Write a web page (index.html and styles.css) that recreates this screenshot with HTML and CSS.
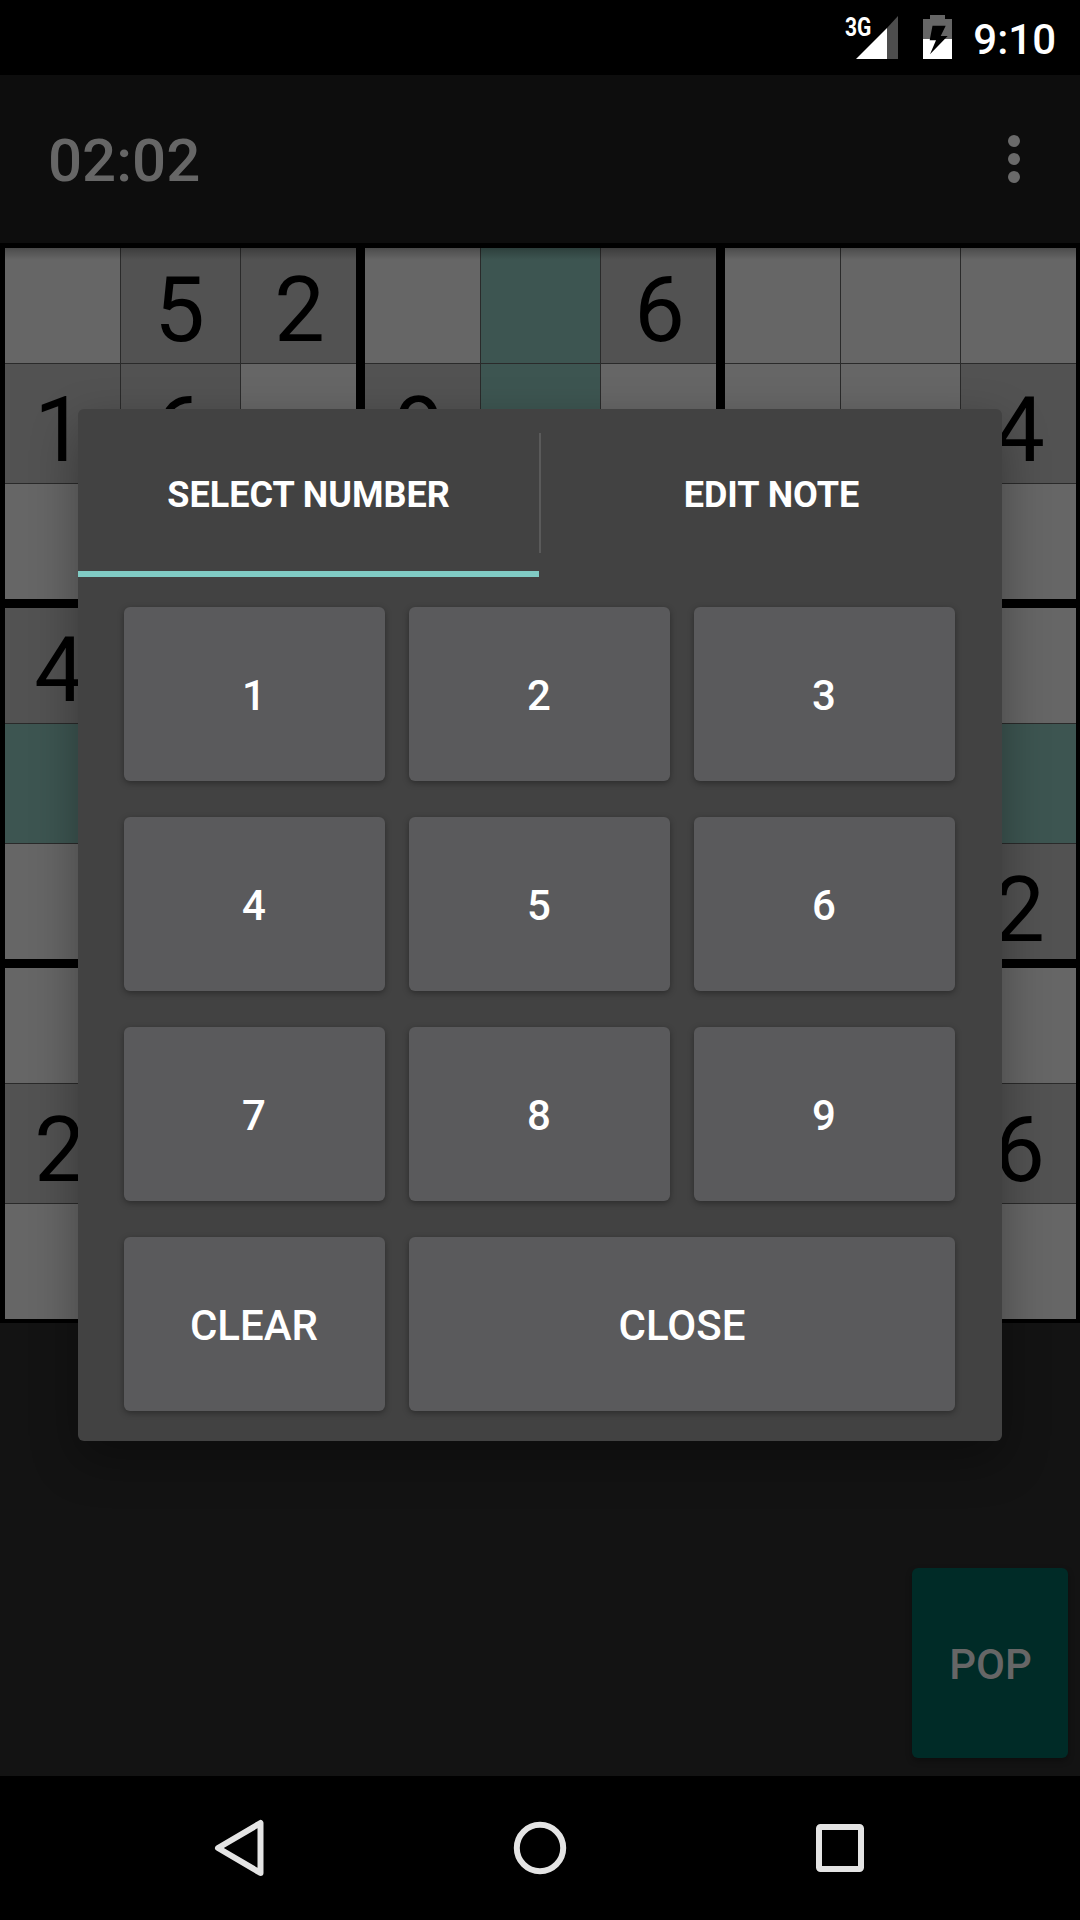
FILE: index.html
```html
<!DOCTYPE html>
<html lang="en">
<head>
<meta charset="utf-8">
<title>Sudoku</title>
<link rel="stylesheet" href="styles.css">
</head>
<body>
<div class="screen">
  <header class="status">
    <svg class="status-icons" width="110" height="75" viewBox="0 0 110 75">
      <path fill="#4d4d4d" d="M45 28 56 16V59H45z"/>
      <path fill="#fff" d="M14 59 45 28V59z"/>
      <path fill="#666" d="M88 15h15v4h7v20H81V19h7z"/>
      <path fill="#fff" d="M81 39h29v20H81z"/>
      <path fill="#000" d="M90.500 25.700H103.700L98.700 36H105.700L88 54.300 94 40.300H87.700z"/>
    </svg>
    <span class="network">3G</span>
    <span class="clock">9:10</span>
  </header>
  <div class="appbar">
    <span class="timer">02:02</span>
    <svg width="12" height="48" viewBox="0 0 12 48" fill="#6a6a6a"><circle cx="6" cy="6" r="6"/><circle cx="6" cy="24" r="6"/><circle cx="6" cy="42" r="6"/></svg>
  </div>
  <main class="board">
    <div class="block"><i></i><i class="given">5</i><i class="given">2</i><i class="given">1</i><i class="given">6</i><i></i><i></i><i></i><i></i></div>
    <div class="block"><i></i><i class="hl"></i><i class="given">6</i><i class="given">9</i><i class="hl"></i><i></i><i></i><i class="hl"></i><i></i></div>
    <div class="block"><i></i><i></i><i></i><i></i><i></i><i class="given">4</i><i></i><i></i><i></i></div>
    <div class="block"><i class="given">4</i><i></i><i></i><i class="hl"></i><i class="hl"></i><i class="hl"></i><i></i><i></i><i></i></div>
    <div class="block"><i></i><i class="hl"></i><i></i><i class="hl"></i><i class="hl"></i><i class="hl"></i><i></i><i class="hl"></i><i></i></div>
    <div class="block"><i></i><i></i><i></i><i class="hl"></i><i class="hl"></i><i class="hl"></i><i></i><i></i><i class="given">2</i></div>
    <div class="block"><i></i><i></i><i></i><i class="given">2</i><i></i><i></i><i></i><i></i><i></i></div>
    <div class="block"><i></i><i class="hl"></i><i></i><i></i><i class="hl"></i><i></i><i></i><i class="hl"></i><i></i></div>
    <div class="block"><i></i><i></i><i></i><i></i><i></i><i class="given">6</i><i></i><i></i><i></i></div>
  </main>
  <div class="actions"><button class="pop">POP</button></div>
  <nav class="navbar">
    <svg width="62" height="62" viewBox="0 0 62 62"><path d="M51.500 6V56L9 31z"/></svg>
    <svg width="62" height="62" viewBox="0 0 62 62"><circle cx="31" cy="31" r="23.200"/></svg>
    <svg width="62" height="62" viewBox="0 0 62 62"><rect x="10" y="10" width="42" height="42" rx="1.500"/></svg>
  </nav>
  <section class="dialog">
    <div class="tabs">
      <div class="tab active">SELECT NUMBER</div>
      <div class="divider"></div>
      <div class="tab">EDIT NOTE</div>
    </div>
    <div class="keys">
      <button>1</button><button>2</button><button>3</button>
      <button>4</button><button>5</button><button>6</button>
      <button>7</button><button>8</button><button>9</button>
      <button>CLEAR</button><button class="wide">CLOSE</button>
    </div>
  </section>
</div>
</body>
</html>
```
FILE: styles.css
```css
* { box-sizing: border-box; }
body { margin: 0; background: #000; font-family: Roboto, sans-serif; }
button { border: 0; padding: 0; margin: 0; font: 500 42px/50px Roboto, sans-serif; border-radius: 6px; }
svg { display: block; }
.screen {
  position: relative; width: 1080px; height: 1920px; overflow: hidden;
  display: flex; flex-direction: column; background: #131313;
}
.status {
  position: relative; height: 75px; background: #000; color: #fff;
  display: flex; justify-content: flex-end; align-items: center; padding-right: 24px;
}
.status-icons { margin-right: 21px; }
/* network label sits over the signal triangle's corner */
.network {
  position: absolute; left: 845px; top: 13px;
  font-weight: 700; font-size: 25px; line-height: 30px;
  transform: scaleX(.84); transform-origin: left;
}
.clock { font-weight: 500; font-size: 42px; line-height: 50px; padding-top: 5px; }
.appbar {
  height: 168px; background: #0d0d0d; color: #666;
  display: flex; align-items: center; justify-content: space-between; padding: 0 60px 0 48px;
}
.timer { font-weight: 500; font-size: 60px; line-height: 70px; padding-top: 4px; }
.board {
  position: relative; height: 1080px; background: #000; padding: 5px 4px 4px 5px;
  display: grid; grid-template-columns: repeat(3, 351px); grid-template-rows: repeat(3, 351px); gap: 9px;
}
.board::before {
  content: ""; position: absolute; left: 0; right: 0; top: 0; height: 17px;
  background: linear-gradient(rgba(0,0,0,.45), rgba(0,0,0,.2) 45%, rgba(0,0,0,0));
}
.block {
  background: #2a2a2a; display: grid; gap: 1px;
  grid-template-columns: 115px 119px 115px; grid-template-rows: 115px 119px 115px;
}
.block i {
  font-style: normal; font-size: 90px; line-height: 105px; color: #000; text-align: center;
  background: #666; padding: 14px 2px 0 0;
}
.block i:nth-child(-n+3) { padding-top: 10px; }
.block i:nth-child(3n+1) { padding-right: 6px; }
.block i:nth-child(3n) { padding-right: 0; padding-left: 2px; }
.block .given { background: #525252; }
.block .hl { background: #3d5551; }
.actions { flex: 1; display: flex; justify-content: flex-end; align-items: flex-end; padding: 0 12px 18px; }
.pop { width: 156px; height: 190px; background: #002b27; color: #666; box-shadow: 0 3px 6px rgba(0,0,0,.3); padding: 4px 0 0 1px; }
.navbar {
  height: 144px; background: #000; display: flex; justify-content: space-between; align-items: center;
  padding: 0 209px;
}
.navbar svg { fill: none; stroke: #e4e4e4; stroke-width: 6; stroke-linejoin: round; }
.dialog {
  position: absolute; left: 78px; top: 409px; width: 924px; height: 1032px;
  background: #424242; border-radius: 6px; color: #fff;
  box-shadow: 0 18px 48px rgba(0,0,0,.33);
}
.tabs { display: flex; height: 168px; }
.tab {
  flex: 1; display: flex; align-items: center; justify-content: center;
  font-weight: 700; font-size: 36px; line-height: 42px; padding-top: 9px; border-bottom: 6px solid transparent;
}
.tab.active { border-color: #80cbc4; }
.divider { width: 2px; height: 120px; margin-top: 24px; background: #5a5a5a; }
.keys {
  padding: 30px 46px; display: grid; gap: 36px 24px;
  grid-template-columns: repeat(3, 261px); grid-auto-rows: 174px;
}
.keys button {
  background: #5a5a5c; color: #fff; padding: 4px 1px 0 0;
  box-shadow: 0 2px 6px rgba(0,0,0,.35);
}
.keys .wide { grid-column: span 2; padding-right: 0; }
```
